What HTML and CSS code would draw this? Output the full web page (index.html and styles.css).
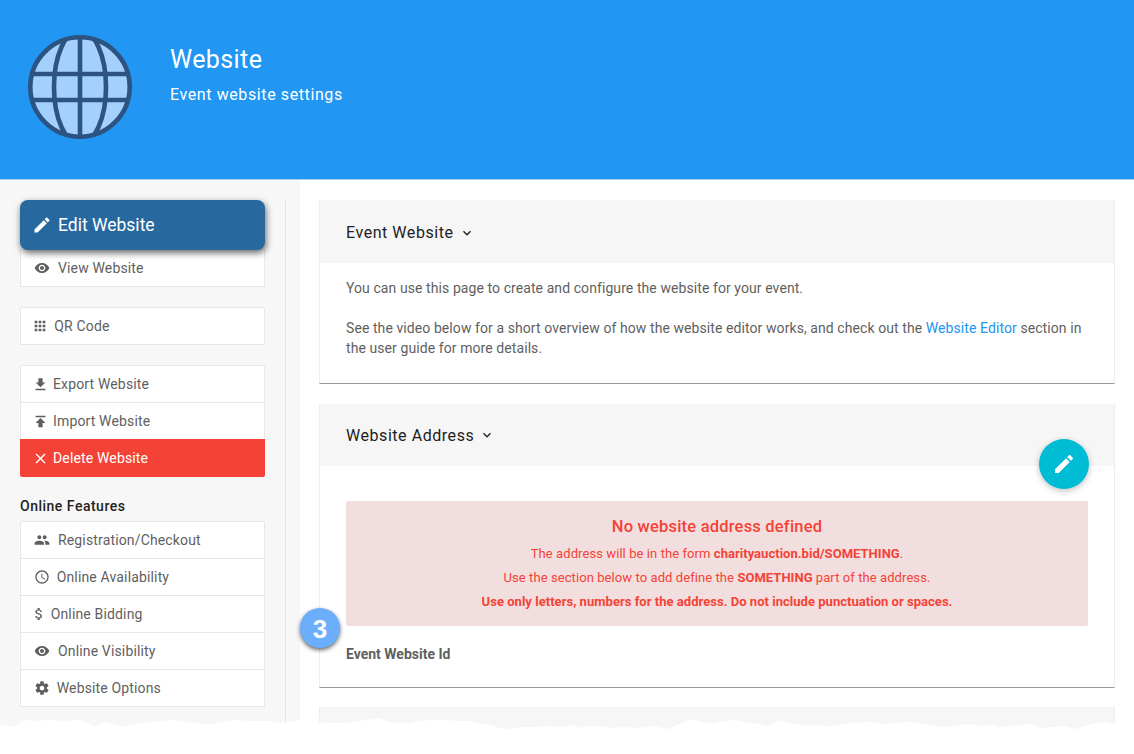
FILE: index.html
```html
<!DOCTYPE html>
<html lang="en" dir="ltr">
    <head>
        <meta charset="utf-8">
        <title>Website</title>
        <link rel="stylesheet" href="styles.css">
    </head>

    <body>
        <svg class="sprite" width="0" height="0">
            <symbol id="i-edit" viewBox="0 0 24 24"><path d="M3 17.25V21h3.75L17.81 9.94l-3.75-3.75L3 17.25zM20.71 7.04c.39-.39.39-1.02 0-1.41l-2.34-2.34c-.39-.39-1.02-.39-1.41 0l-1.83 1.83 3.75 3.75 1.83-1.83z"/></symbol>
            <symbol id="i-eye" viewBox="0 0 24 24"><path d="M12 4.5C7 4.5 2.73 7.61 1 12c1.73 4.39 6 7.5 11 7.5s9.27-3.11 11-7.5c-1.73-4.39-6-7.5-11-7.5zM12 17c-2.76 0-5-2.24-5-5s2.24-5 5-5 5 2.24 5 5-2.24 5-5 5zm0-8c-1.66 0-3 1.34-3 3s1.34 3 3 3 3-1.34 3-3-1.34-3-3-3z"/></symbol>
            <symbol id="i-grid" viewBox="0 0 24 24"><path d="M4 4h4v4H4zM10 4h4v4h-4zM16 4h4v4h-4zM4 10h4v4H4zM10 10h4v4h-4zM16 10h4v4h-4zM4 16h4v4H4zM10 16h4v4h-4zM16 16h4v4h-4z"/></symbol>
            <symbol id="i-down" viewBox="0 0 24 24"><path d="M19 9h-4V3H9v6H5l7 7 7-7zM5 18v2h14v-2H5z"/></symbol>
            <symbol id="i-up" viewBox="0 0 24 24"><path d="M5 4v2h14V4H5zm0 10h4v6h6v-6h4l-7-7-7 7z"/></symbol>
            <symbol id="i-close" viewBox="0 0 24 24"><path d="M19 6.41L17.59 5 12 10.59 6.41 5 5 6.41 10.59 12 5 17.59 6.41 19 12 13.41 17.59 19 19 17.59 13.41 12z"/></symbol>
            <symbol id="i-people" viewBox="0 0 24 24"><path d="M16 11c1.66 0 2.99-1.34 2.99-3S17.66 5 16 5c-1.66 0-3 1.34-3 3s1.34 3 3 3zm-8 0c1.66 0 2.99-1.34 2.99-3S9.66 5 8 5C6.34 5 5 6.34 5 8s1.34 3 3 3zm0 2c-2.33 0-7 1.17-7 3.5V19h14v-2.5c0-2.33-4.67-3.5-7-3.5zm8 0c-.29 0-.62.02-.97.05 1.16.84 1.97 1.97 1.97 3.45V19h6v-2.5c0-2.33-4.67-3.5-7-3.5z"/></symbol>
            <symbol id="i-clock" viewBox="0 0 24 24"><path d="M11.99 2C6.47 2 2 6.48 2 12s4.47 10 9.99 10C17.52 22 22 17.52 22 12S17.52 2 11.99 2zM12 20c-4.42 0-8-3.58-8-8s3.58-8 8-8 8 3.58 8 8-3.58 8-8 8zm.5-13H11v6l5.25 3.15.75-1.23-4.5-2.67z"/></symbol>
            <symbol id="i-money" viewBox="0 0 24 24"><path d="M11.8 10.9c-2.27-.59-3-1.2-3-2.15 0-1.09 1.01-1.85 2.7-1.85 1.78 0 2.44.85 2.5 2.1h2.21c-.07-1.72-1.12-3.3-3.21-3.81V3h-3v2.16c-1.94.42-3.5 1.68-3.5 3.61 0 2.31 1.91 3.46 4.7 4.13 2.5.6 3 1.48 3 2.41 0 .69-.49 1.79-2.7 1.79-2.06 0-2.87-.92-2.98-2.1h-2.2c.12 2.19 1.76 3.42 3.68 3.83V21h3v-2.15c1.95-.37 3.5-1.5 3.5-3.55 0-2.84-2.43-3.81-4.7-4.4z"/></symbol>
            <symbol id="i-gear" viewBox="0 0 24 24"><path d="M19.43 12.98c.04-.32.07-.64.07-.98s-.03-.66-.07-.98l2.11-1.65c.19-.15.24-.42.12-.64l-2-3.46c-.12-.22-.39-.3-.61-.22l-2.49 1c-.52-.4-1.08-.73-1.69-.98l-.38-2.65C14.46 2.18 14.25 2 14 2h-4c-.25 0-.46.18-.49.42l-.38 2.65c-.61.25-1.17.59-1.69.98l-2.49-1c-.23-.09-.49 0-.61.22l-2 3.46c-.13.22-.07.49.12.64l2.11 1.65c-.04.32-.07.65-.07.98s.03.66.07.98l-2.11 1.65c-.19.15-.24.42-.12.64l2 3.46c.12.22.39.3.61.22l2.49-1c.52.4 1.08.73 1.69.98l.38 2.65c.03.24.24.42.49.42h4c.25 0 .46-.18.49-.42l.38-2.65c.61-.25 1.17-.59 1.69-.98l2.49 1c.23.09.49 0 .61-.22l2-3.46c.12-.22.07-.49-.12-.64l-2.11-1.65zM12 15.5c-1.93 0-3.5-1.57-3.5-3.5s1.57-3.5 3.5-3.5 3.5 1.57 3.5 3.5-1.57 3.5-3.5 3.5z"/></symbol>
            <symbol id="i-more" viewBox="0 0 24 24"><path d="M16.59 8.59L12 13.17 7.41 8.59 6 10l6 6 6-6z"/></symbol>
            <clipPath id="globe-clip"><circle cx="53" cy="53" r="50"/></clipPath>
        </svg>

        <header class="top">
            <svg class="globe" width="106" height="106" viewBox="0 0 106 106">
                <circle cx="53" cy="53" r="50" fill="#a3d0fd"/>
                <g clip-path="url(#globe-clip)" fill="none" stroke="#2d5383" stroke-width="4.6">
                    <ellipse cx="53" cy="53" rx="26" ry="57"/>
                    <path d="M53 3v100M3 40h100M3 66h100"/>
                </g>
                <circle cx="53" cy="53" r="49.7" fill="none" stroke="#2d5383" stroke-width="4.6"/>
            </svg>
            <div class="top-text">
                <h1>Website</h1>
                <p>Event website settings</p>
            </div>
        </header>

        <div class="page">
            <aside class="side">
                <div class="side-in">
                    <div class="btn-group">
                        <a class="btn btn--main"><svg class="ico ico--main"><use href="#i-edit"/></svg>Edit Website</a>
                        <a class="btn"><svg class="ico ico--wide"><use href="#i-eye"/></svg>View Website</a>
                    </div>
                    <div class="btn-group">
                        <a class="btn"><svg class="ico ico--grid"><use href="#i-grid"/></svg>QR Code</a>
                    </div>
                    <div class="btn-group">
                        <a class="btn"><svg class="ico ico--file"><use href="#i-down"/></svg>Export Website</a>
                        <a class="btn"><svg class="ico ico--file"><use href="#i-up"/></svg>Import Website</a>
                        <a class="btn btn--danger"><svg class="ico ico--file"><use href="#i-close"/></svg>Delete Website</a>
                    </div>
                    <h4>Online Features</h4>
                    <div class="btn-group">
                        <a class="btn"><svg class="ico ico--wide"><use href="#i-people"/></svg>Registration/Checkout</a>
                        <a class="btn"><svg class="ico ico--round"><use href="#i-clock"/></svg>Online Availability</a>
                        <a class="btn"><svg class="ico ico--thin"><use href="#i-money"/></svg>Online Bidding</a>
                        <a class="btn"><svg class="ico ico--wide"><use href="#i-eye"/></svg>Online Visibility</a>
                        <a class="btn"><svg class="ico ico--round"><use href="#i-gear"/></svg>Website Options</a>
                    </div>
                </div>
            </aside>

            <main class="main">
                <section class="card">
                    <div class="card-head card-head--first">Event Website<svg class="more"><use href="#i-more"/></svg></div>
                    <div class="card-body">
                        <p>You can use this page to create and configure the website for your event.</p>
                        <p>See the video below for a short overview of how the website editor works, and check out the <a class="link">Website Editor</a> section in the user guide for more details.</p>
                    </div>
                </section>

                <section class="card card--addr">
                    <div class="card-head">Website Address<svg class="more"><use href="#i-more"/></svg></div>
                    <a class="fab"><svg width="24" height="24"><use href="#i-edit"/></svg></a>
                    <div class="card-body card-body--addr">
                        <div class="alert">
                            <h3>No website address defined</h3>
                            <div>The address will be in the form <b>charityauction.bid/SOMETHING</b>.</div>
                            <div>Use the section below to add define the <b>SOMETHING</b> part of the address.</div>
                            <div><b>Use only letters, numbers for the address. Do not include punctuation or spaces.</b></div>
                        </div>
                        <label class="field">Event Website Id</label>
                    </div>
                    <span class="badge">3</span>
                </section>

                <section class="card card--next">
                    <div class="card-head"></div>
                </section>
            </main>
        </div>

        <svg class="tear" width="1134" height="44" viewBox="0 0 1134 44">
            <path fill="#fff" d="M0 15L8 16 15 16 20 13 25 10 35 11 50 10 65 11 80 10 88 13 95 17 100 14 105 12 115 15 125 17 130 15 135 14 150 12 165 11 175 10 185 12 197 13 210 15 222 12 235 10 250 11 270 11 280 13 290 12 300 10 315 12 328 13 340 13 355 12 370 9 380 8 386 11 395 13 402 12 410 14 420 11 432 10 445 10 460 11 470 11 480 14 490 15 500 18 510 19 520 17 535 17 550 16 562 17 572 15 580 18 590 16 600 16 612 18 625 17 640 18 652 16 668 19 677 15 685 12 692 9 702 12 712 14 725 11 735 10 745 12 760 14 768 16 775 12 780 10 786 12 794 14 805 16 815 15 830 16 842 14 855 13 868 12 878 13 885 14 896 13 908 12 920 13 930 15 942 17 955 16 968 14 980 16 992 15 1000 17 1010 16 1020 15 1030 14 1040 18 1050 17 1065 16 1075 19 1088 15 1098 13 1105 12 1112 14 1116 13 L1134 13 V44 H0z"/>
        </svg>
    </body>

</html>
```

FILE: styles.css
```css
html, body {
    margin: 0;
    height: 754px;
    overflow: hidden;
    background: #fff;
    font-family: Roboto, 'Liberation Sans', sans-serif;
    font-size: 14px;
    color: #5f5f5f;
}
.sprite {
    display: block;
    height: 0;
}
.top {
    height: 145px;
    background: #2196f3;
    border-bottom: 1px solid #a9cdea;
    display: flex;
    padding-left: 27px;
    padding-top: 34px;
}
.globe {
    display: block;
}
.top-text {
    margin-left: 37px;
    color: #fff;
}
.top-text h1 {
    font-size: 25px;
    font-weight: 400;
    line-height: 30px;
    margin: 11px 0 8px;
    letter-spacing: .4px;
}
.top-text p {
    font-size: 16px;
    line-height: 24px;
    margin: 0;
    letter-spacing: .6px;
}
.page {
    display: flex;
}
.side {
    width: 285px;
    padding: 20px 15px 0 0;
    background: #f7f7f7;
    height: 574px;
}
.side-in {
    width: 245px;
    height: 554px;
    padding-left: 20px;
    padding-right: 20px;
    border-right: 1px solid #e6e6e6;
}
.btn-group {
    margin-bottom: 20px;
    display: flex;
    flex-direction: column;
}
.btn {
    display: flex;
    align-items: center;
    box-sizing: border-box;
    height: 37px;
    padding-left: 14px;
    background: #fff;
    border: 1px solid #e7e7e7;
    border-top-width: 0;
    letter-spacing: .15px;
}
.btn:first-child {
    border-top-width: 1px;
    height: 38px;
    border-radius: 2px 2px 0 0;
}
.btn--main, .btn--main:first-child {
    height: 50px;
    background: #27689f;
    color: #fff;
    font-size: 17.5px;
    border: 0;
    border-radius: 8px;
    padding-left: 11.5px;
    box-shadow: 1px 3px 7px rgba(0, 0, 0, .6);
    position: relative;
    letter-spacing: 0;
}
.btn--danger {
    background: #f44336;
    color: #fff;
    border: 0;
    height: 38px;
    margin-top: -1px;
    padding-left: 15px;
    border-radius: 0 0 2px 2px;
}
.ico {
    width: 16px;
    height: 16px;
    fill: currentColor;
    flex: none;
}
.ico--main {
    width: 20px;
    height: 20px;
    margin-right: 6.5px;
}
.ico--wide {
    margin-left: -.7px;
    margin-right: 7.7px;
}
.ico--grid {
    margin-left: -2.7px;
    margin-right: 6px;
}
.ico--file {
    width: 17px;
    height: 17px;
    margin-left: -3.5px;
    margin-right: 4.5px;
}
.ico--round {
    margin-left: -1.3px;
    margin-right: 7px;
}
.ico--thin {
    margin-left: -4.3px;
    margin-right: 4px;
}
.side h4 {
    font-size: 14px;
    font-weight: 500;
    color: #222;
    margin: 0 0 6px;
    padding-top: 1px;
    line-height: 17px;
    letter-spacing: .5px;
}
.main {
    width: 796px;
    padding-top: 20px;
    margin-left: 19px;
}
.card {
    background: #fff;
    border: 1px solid #eee;
    border-top: 0;
    border-bottom: 1px solid #999;
    margin-bottom: 20px;
    position: relative;
}
.card--addr {
    margin-bottom: 19px;
}
.card-head {
    height: 63px;
    box-sizing: border-box;
    background: #f6f6f6;
    display: flex;
    align-items: center;
    padding-left: 26px;
    font-size: 16px;
    color: #222;
    letter-spacing: .55px;
}
.card-head--first {
    padding-top: 2px;
}
.more {
    width: 16px;
    height: 16px;
    margin-left: 5px;
    fill: #222;
}
.card-body {
    padding: 8px 26px 17px;
    height: 95px;
    line-height: 20px;
    letter-spacing: .08px;
}
.card-body p {
    margin: 7px 0 20px;
}
.card-body p + p {
    margin: 0;
}
.link {
    color: #2196f3;
}
.card--addr .card-head {
    height: 62px;
}
.card-body--addr {
    padding: 35px 26px 0;
    height: 186px;
}
.alert {
    background: #f2dede;
    color: #f44336;
    height: 125px;
    text-align: center;
    border-radius: 2px;
    font-size: 13px;
    line-height: 24px;
    padding-top: 14px;
    box-sizing: border-box;
}
.alert h3 {
    font-size: 16.5px;
    font-weight: 500;
    line-height: 24px;
    margin: 0 0 3px;
    letter-spacing: .2px;
}
.alert b {
    font-weight: 700;
    letter-spacing: .03px;
}
.field {
    display: block;
    font-weight: 700;
    margin-top: 19px;
    line-height: 18px;
    font-size: 14px;
    letter-spacing: 0;
}
.fab {
    position: absolute;
    right: 25px;
    top: 35px;
    width: 50px;
    height: 50px;
    border-radius: 50%;
    background: #00bcd4;
    box-shadow: 0 2px 6px rgba(0, 0, 0, .25);
    display: flex;
    align-items: center;
    justify-content: center;
    fill: #fff;
}
.badge {
    position: absolute;
    left: -20px;
    top: 204px;
    width: 40px;
    height: 40px;
    border-radius: 50%;
    background: #6aaefc;
    box-shadow: 0 2px 4px rgba(0, 0, 0, .6);
    color: #fff;
    font-family: 'Liberation Sans', sans-serif;
    font-weight: 700;
    font-size: 26px;
    line-height: 43px;
    text-align: center;
}
.card--next {
    border-bottom: 0;
}
.tear {
    position: absolute;
    left: 0;
    top: 710px;
    display: block;
}
```
